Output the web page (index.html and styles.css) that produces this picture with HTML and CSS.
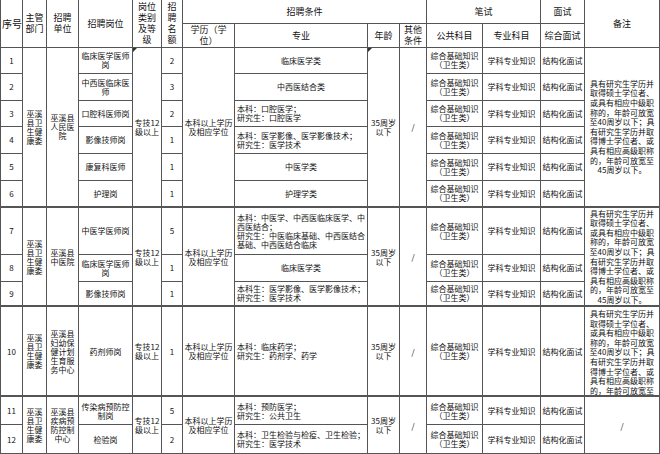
FILE: index.html
```html
<!DOCTYPE html>
<html lang="zh-CN">
<head>
<meta charset="utf-8">
<title>招聘岗位一览表</title>
<link rel="stylesheet" href="styles.css">
</head>
<body>
<table class="grid">
<colgroup>
<col class="w22"><col class="w24"><col class="w32"><col class="w54"><col class="w29"><col class="w21"><col class="w52"><col class="w133"><col class="w32"><col class="w27"><col class="w56"><col class="w58"><col class="w44"><col class="w75">
</colgroup>
<thead>
<tr class="h23">
<th rowspan="2" class="big">序号</th>
<th rowspan="2">主管<br>部门</th>
<th rowspan="2">招聘<br>单位</th>
<th rowspan="2">招聘岗位</th>
<th rowspan="2">岗位<br>类别<br>及等<br>级</th>
<th rowspan="2">招<br>聘<br>名<br>额</th>
<th colspan="4">招聘条件</th>
<th colspan="2">笔试</th>
<th>面试</th>
<th rowspan="2">备注</th>
</tr>
<tr class="h24">
<th>学历（学<br>位）</th>
<th>专业</th>
<th>年龄</th>
<th>其他<br>条件</th>
<th>公共科目</th>
<th>专业科目</th>
<th>综合面试</th>
</tr>
</thead>
<tbody>
<tr class="h26">
<td>1</td>
<td rowspan="6">巫溪<br>县卫<br>生健<br>康委</td>
<td rowspan="6">巫溪县<br>人民医<br>院</td>
<td>临床医学医师<br>岗</td>
<td rowspan="6" class="mark">专技12<br>级以上</td>
<td>2</td>
<td rowspan="6">本科以上学历<br>及相应学位</td>
<td>临床医学类</td>
<td rowspan="6" class="mark">35周岁<br>以下</td>
<td rowspan="6">/</td>
<td>综合基础知识<br>（卫生类）</td>
<td>学科专业知识</td>
<td>结构化面试</td>
<td rowspan="6" class="note">具有研究生学历并<br>取得硕士学位者、<br>或具有相应中级职<br>称的，年龄可放宽<br>至40周岁以下；具<br>有研究生学历并取<br>得博士学位者、或<br>具有相应高级职称<br>的，年龄可放宽至<br>45周岁以下。</td>
</tr>
<tr class="h27">
<td>2</td>
<td>中西医临床医<br>师</td>
<td>3</td>
<td>中西医结合类</td>
<td>综合基础知识<br>（卫生类）</td>
<td>学科专业知识</td>
<td>结构化面试</td>
</tr>
<tr class="h26">
<td>3</td>
<td>口腔科医师岗</td>
<td>2</td>
<td class="lt">本科：口腔医学；<br>研究生：口腔医学</td>
<td>综合基础知识<br>（卫生类）</td>
<td>学科专业知识</td>
<td>结构化面试</td>
</tr>
<tr class="h27">
<td>4</td>
<td>影像技师岗</td>
<td>1</td>
<td class="lt">本科：医学影像、医学影像技术；<br>研究生：医学技术</td>
<td>综合基础知识<br>（卫生类）</td>
<td>学科专业知识</td>
<td>结构化面试</td>
</tr>
<tr class="h27">
<td>5</td>
<td>康复科医师</td>
<td>1</td>
<td>中医学类</td>
<td>综合基础知识<br>（卫生类）</td>
<td>学科专业知识</td>
<td>结构化面试</td>
</tr>
<tr class="h27">
<td>6</td>
<td>护理岗</td>
<td>1</td>
<td>护理学类</td>
<td>综合基础知识<br>（卫生类）</td>
<td>学科专业知识</td>
<td>结构化面试</td>
</tr>
<tr class="h47 grp">
<td>7</td>
<td rowspan="3">巫溪<br>县卫<br>生健<br>康委</td>
<td rowspan="3">巫溪县<br>中医院</td>
<td>中医学医师岗</td>
<td rowspan="3">专技12<br>级以上</td>
<td>5</td>
<td rowspan="3">本科以上学历<br>及相应学位</td>
<td class="lt">本科：中医学、中西医临床医学、中<br>西医结合；<br>研究生：中医临床基础、中西医结合<br>基础、中西医结合临床</td>
<td rowspan="3">35周岁<br>以下</td>
<td rowspan="3">/</td>
<td>综合基础知识<br>（卫生类）</td>
<td>学科专业知识</td>
<td>结构化面试</td>
<td rowspan="3" class="note">具有研究生学历并<br>取得硕士学位者、<br>或具有相应中级职<br>称的，年龄可放宽<br>至40周岁以下；具<br>有研究生学历并取<br>得博士学位者、或<br>具有相应高级职称<br>的，年龄可放宽至<br>45周岁以下。</td>
</tr>
<tr class="h27">
<td>8</td>
<td>临床医学医师<br>岗</td>
<td>1</td>
<td>临床医学类</td>
<td>综合基础知识<br>（卫生类）</td>
<td>学科专业知识</td>
<td>结构化面试</td>
</tr>
<tr class="h25">
<td>9</td>
<td>影像技师岗</td>
<td>1</td>
<td class="lt">本科生：医学影像、医学影像技术；<br>研究生：医学技术</td>
<td>综合基础知识<br>（卫生类）</td>
<td>学科专业知识</td>
<td>结构化面试</td>
</tr>
<tr class="h89 grp">
<td>10</td>
<td>巫溪<br>县卫<br>生健<br>康委</td>
<td>巫溪县<br>妇幼保<br>健计划<br>生育服<br>务中心</td>
<td>药剂师岗</td>
<td>专技12<br>级以上</td>
<td>1</td>
<td>本科以上学历<br>及相应学位</td>
<td class="lt">本科：临床药学；<br>研究生：药剂学、药学</td>
<td>35周岁<br>以下</td>
<td>/</td>
<td>综合基础知识<br>（卫生类）</td>
<td>学科专业知识</td>
<td>结构化面试</td>
<td class="note top">具有研究生学历并<br>取得硕士学位者、<br>或具有相应中级职<br>称的，年龄可放宽<br>至40周岁以下；具<br>有研究生学历并取<br>得博士学位者、或<br>具有相应高级职称<br>的，年龄可放宽至</td>
</tr>
<tr class="h28 grp">
<td>11</td>
<td rowspan="2">巫溪<br>县卫<br>生健<br>康委</td>
<td rowspan="2">巫溪县<br>疾病预<br>防控制<br>中心</td>
<td>传染病预防控<br>制岗</td>
<td rowspan="2">专技12<br>级以上</td>
<td>5</td>
<td rowspan="2">本科以上学历<br>及相应学位</td>
<td class="lt">本科：预防医学；<br>研究生：公共卫生</td>
<td rowspan="2">35周岁<br>以下</td>
<td rowspan="2">/</td>
<td>综合基础知识<br>（卫生类）</td>
<td>学科专业知识</td>
<td>结构化面试</td>
<td rowspan="2">/</td>
</tr>
<tr class="h30 last">
<td>12</td>
<td>检验岗</td>
<td>2</td>
<td class="lt">本科：卫生检验与检疫、卫生检验；<br>研究生：医学技术</td>
<td>综合基础知识<br>（卫生类）</td>
<td>学科专业知识</td>
<td>结构化面试</td>
</tr>
</tbody>
</table>
</body>
</html>
```

FILE: styles.css
```css
html, body {
  margin: 0;
  padding: 0;
  background: #ffffff;
}

body {
  font-family: "Noto Sans CJK SC", "Liberation Sans", sans-serif;
  color: #111111;
}

.grid {
  border-collapse: collapse;
  table-layout: fixed;
  width: 659px;
  font-size: 8px;
  line-height: 9px;
}

.w22 { width: 22px; }
.w24 { width: 24px; }
.w32 { width: 32px; }
.w54 { width: 54px; }
.w29 { width: 29px; }
.w21 { width: 21px; }
.w52 { width: 52px; }
.w133 { width: 133px; }
.w27 { width: 27px; }
.w56 { width: 56px; }
.w58 { width: 58px; }
.w44 { width: 44px; }
.w75 { width: 75px; }

.grid th,
.grid td {
  border: 1px solid #555555;
  padding: 0 1px;
  text-align: center;
  vertical-align: middle;
  white-space: nowrap;
  overflow: hidden;
}

.grid th {
  font-weight: normal;
  font-size: 9px;
  line-height: 11px;
}

.grid th.big {
  font-size: 10px;
}

.grid thead tr.h23 th {
  border-top: none;
}

.h23 { height: 23px; }
.h24 { height: 24px; }
.h25 { height: 25px; }
.h26 { height: 26px; }
.h27 { height: 27px; }
.h28 { height: 28px; }
.h30 { height: 30px; }
.h47 { height: 47px; }
.h89 { height: 89px; }

.grid tr.grp > td {
  border-top: 2px solid #555555;
}

.grid tr.last > td,
.grid tr.grp > td[rowspan="2"] {
  border-bottom: 2px solid #555555;
}

.grid td.lt {
  text-align: left;
  padding-left: 2px;
}

.grid td.note {
  line-height: 9.6px;
  text-align: center;
}

.grid td.top {
  vertical-align: top;
  padding-top: 2px;
}

.grid td.mark {
  position: relative;
}

.grid td.mark::before {
  content: "";
  position: absolute;
  left: 0;
  top: 0;
  border-top: 4px solid #333333;
  border-right: 4px solid transparent;
}
```
